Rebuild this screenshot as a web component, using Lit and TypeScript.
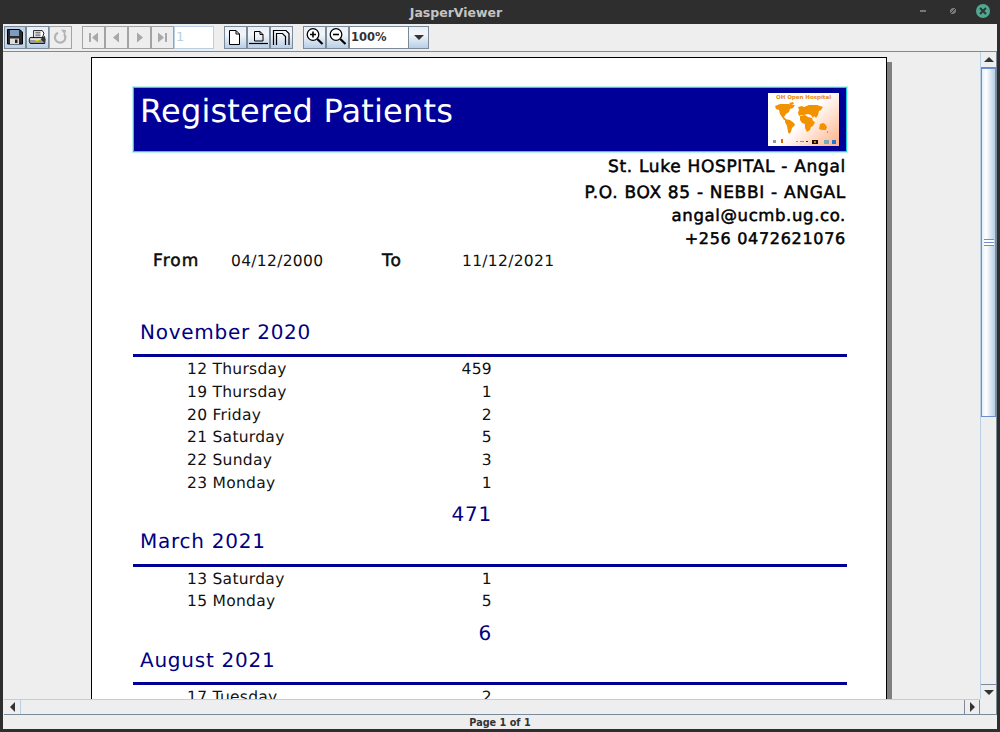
import { LitElement, html, css, svg } from "lit";
import { customElement } from "lit/decorators.js";

const I = {
  save: svg`<path d="M3.5 3.5h12l3 2.5v12h-15z" fill="#2b2b2b" stroke="#000"/><rect x="6" y="4" width="9" height="6" fill="#7d9cc0"/><rect x="6" y="12.5" width="9" height="5.5" fill="#ddd"/><rect x="11" y="13.5" width="2.5" height="3.5" fill="#222"/>`,
  print: svg`<g transform="translate(1.6 2) scale(.86)"><path d="M7 3h10l2 3-2 6H7z" fill="#fff" stroke="#000"/><path d="M9 5h6M9 7h6M9 9h6" stroke="#444"/><path d="M3 11h16l1 2v5H3l-1-2v-3z" fill="#9a9a9a" stroke="#000"/><rect x="3" y="12" width="16" height="2" fill="#e4e4e4"/><rect x="9" y="14" width="4" height="1.5" fill="#e8d800"/><path d="M15 13l5-4 1 5-2 3z" fill="#333"/></g>`,
  reload: svg`<path d="M15 8a5.2 5.2 0 1 1-6-1.3" fill="none" stroke="#b3b3b3" stroke-width="2.2"/><path d="M12 3.5l5 .5-1 5z" fill="#b3b3b3"/>`,
  first: svg`<rect x="7" y="7" width="2" height="9" fill="#a8a8a8"/><path d="M16 6.5v10L10 11.5z" fill="#a8a8a8"/>`,
  prev: svg`<path d="M14 6.5v10L8 11.5z" fill="#a8a8a8"/>`,
  next: svg`<path d="M9 6.5v10l6-5z" fill="#a8a8a8"/>`,
  last: svg`<rect x="14" y="7" width="2" height="9" fill="#a8a8a8"/><path d="M7 6.5v10l6-5z" fill="#a8a8a8"/>`,
  actual: svg`<path d="M5.5 4.5h6.5l3.5 3.5v10.5h-10z" fill="#fff" stroke="#000"/><path d="M12 4.5V8h3.5" fill="none" stroke="#000"/>`,
  fitw: svg`<path d="M7.5 5.5h5.5l3 3v6.5h-8.5z" fill="none" stroke="#000"/><path d="M13 5.5v3h3" fill="none" stroke="#000"/><path d="M2 17.5h19" stroke="#000" stroke-width="1.2"/>`,
  fitp: svg`<path d="M3.5 19V4.5h12.5l3 3V19" fill="none" stroke="#000" stroke-width="1.2"/><path d="M6.5 19V7.5h6l3 3V19" fill="none" stroke="#000" stroke-width="1.2"/>`,
  zin: svg`<circle cx="10" cy="8.5" r="5.8" fill="#fff" stroke="#000" stroke-width="1.3"/><path d="M7 8.5h6M10 5.5v6" stroke="#000" stroke-width="1.6"/><path d="M14.3 13l5.2 5" stroke="#000" stroke-width="2.2"/>`,
  zout: svg`<circle cx="10" cy="8.5" r="5.8" fill="#fff" stroke="#000" stroke-width="1.3"/><path d="M7 8.5h6" stroke="#000" stroke-width="1.6"/><path d="M14.3 13l5.2 5" stroke="#000" stroke-width="2.2"/>`,
};

const groups = [
  { top: 48, ruleTop: 10, ruleBottom: 1, totalTop: 7, days: [["12 Thursday", "459"], ["19 Thursday", "1"], ["20 Friday", "2"], ["21 Saturday", "5"], ["22 Sunday", "3"], ["23 Monday", "1"]], title: "November 2020", total: "471" },
  { top: 3, ruleTop: 11, ruleBottom: 1, totalTop: 8, days: [["13 Saturday", "1"], ["15 Monday", "5"]], title: "March 2021", total: "6" },
  { top: 3, ruleTop: 10, ruleBottom: 1, totalTop: 0, days: [["17 Tuesday", "2"]], title: "August 2021", total: "" },
];

@customElement("app-root")
export class AppRoot extends LitElement {
  static styles = css`
    :host { display: block; width: 1000px; height: 732px; overflow: hidden; background: #2e2e2e; font-family: "DejaVu Sans", sans-serif; }
    .titlebar { height: 24px; display: flex; align-items: center; position: relative; justify-content: center; padding-right: 88px; box-sizing: border-box; color: #c4c4c4; font-size: 12.5px; font-weight: 700; }
    .wctl { position: absolute; right: 10px; top: 1px; display: flex; align-items: center; height: 20px; }
    .min { width: 6px; height: 2px; background: #777; margin-right: 24px; }
    .max { width: 6px; height: 6px; margin-right: 20px; }
    .close { width: 14px; height: 14px; border-radius: 50%; background: #4fa88f; display: flex; align-items: center; justify-content: center; }
    .win { margin: 0 3px; height: 705px; background: #eee; display: flex; flex-direction: column; }
    .toolbar { box-sizing: border-box; flex: none; display: flex; align-items: flex-start; padding: 2px 0 0 1px; border-bottom: 1px solid #7a8a99; height: 28px; }
    .btn { width: 23px; height: 23px; box-sizing: border-box; border: 1px solid #7a8a99; background: linear-gradient(#e8f0f8, #f3f6fa 35%, #b8cfe5); }
    .btn svg { width: 23px; height: 23px; display: block; margin: -1px; }
    .btn.off { border-color: #a3a3a3; background: #eee; }
    .btn.save { width: 22px; background: linear-gradient(#b8cfe5, #d6e3ef 60%, #b8cfe5); }
    .gap { width: 10px; flex: none; }
    .page-in { width: 40px; height: 23px; box-sizing: border-box; border: 1px solid #b8cfe5; background: #fff; color: #b8cfe5; font-size: 13px; padding: 2px 0 0 1px; }
    .zoom { width: 60px; height: 23px; box-sizing: border-box; border: 1px solid #7a8a99; background: #fff; font-weight: 700; font-size: 11.5px; line-height: 21px; padding-left: 1px; color: #333; }
    .combo { width: 20px; height: 23px; box-sizing: border-box; border: 1px solid #7a8a99; border-left: 0; background: linear-gradient(#e8f0f8, #f3f6fa 35%, #b8cfe5); display: flex; align-items: center; justify-content: center; }
    .tri-d { width: 0; height: 0; border: 5px solid transparent; border-top: 5px solid #333; border-bottom: 0; }
    .tri-u { width: 0; height: 0; border: 5px solid transparent; border-bottom: 5px solid #333; border-top: 0; }
    .tri-l { width: 0; height: 0; border: 5px solid transparent; border-right: 5px solid #333; border-left: 0; }
    .tri-r { width: 0; height: 0; border: 5px solid transparent; border-left: 5px solid #333; border-right: 0; }
    .main { flex: none; height: 647px; display: flex; padding-left: 1px; }
    .view { width: 976px; height: 647px; overflow: hidden; padding: 5px 0 0 87px; box-sizing: border-box; }
    .page { width: 796px; height: 800px; box-sizing: border-box; background: #fff; border: 1px solid #000; box-shadow: 5px 5px 0 #808080; padding: 29px 39px 0 41px; color: #000; text-rendering: geometricPrecision; }
    .banner { height: 65px; box-sizing: border-box; background: #000099; border: 1px solid #22d0d0; box-shadow: 0 0 0 1px rgba(34, 208, 208, .3); color: #fff; display: flex; justify-content: space-between; padding: 5px 7px 0 6px; }
    .banner h1 { margin: 0; font-size: 32px; font-weight: 400; line-height: 36px; letter-spacing: .2px; white-space: nowrap; }
    .logo { width: 71px; height: 53px; background: linear-gradient(135deg, #fff 50%, #ffb890 95%); position: relative; overflow: hidden; }
    .logo span { position: absolute; left: 0; right: 0; top: 2px; text-align: center; font-size: 5.5px; font-weight: 700; color: #e8890c; line-height: 7px; white-space: nowrap; }
    .logo svg { position: absolute; inset: 0; width: 71px; height: 53px; }
    .hosp { text-align: right; padding-right: 1px; font-size: 17px; -webkit-text-stroke: .5px #000; }
    .hosp div { white-space: nowrap; letter-spacing: .68px; }
    .h1 { height: 27px; line-height: 31px; }
    .h2 { height: 25px; line-height: 28px; }
    .hosp .h3 { height: 23px; line-height: 23px; font-size: 16.5px; letter-spacing: .62px; }
    .hosp .h4 { height: 23px; line-height: 23px; font-size: 16px; letter-spacing: .7px; }
    .range { display: flex; height: 23px; align-items: center; font-size: 15.5px; margin-top: -1px; white-space: nowrap; color: #111; }
    .range b { font-size: 17px; font-weight: 400; letter-spacing: 1.1px; -webkit-text-stroke: .5px #000; }
    .range span { letter-spacing: .3px; }
    .c1 { width: 78px; padding-left: 20px; }
    .c2 { width: 151px; }
    .c3 { width: 80px; }
    .group { width: 714px; }
    .mtitle { height: 24px; line-height: 24px; padding-left: 7px; font-size: 20px; color: #000080; letter-spacing: .75px; white-space: nowrap; }
    .rule { height: 3px; background: #000099; }
    .row { height: 22.75px; line-height: 22.75px; display: flex; font-size: 15.5px; color: #111; white-space: nowrap; }
    .row .d { width: 54px; }
    .row .n { width: 245px; letter-spacing: .28px; }
    .row .v { width: 60px; text-align: right; letter-spacing: .3px; }
    .total { height: 24px; line-height: 24px; width: 359px; text-align: right; font-size: 20px; color: #000080; letter-spacing: .75px; }
    .vs { width: 17px; height: 647px; box-sizing: border-box; display: flex; flex-direction: column; border-left: 1px solid #b8cfe5; border-right: 1px solid #7a8a99; }
    .vs .b { height: 16px; flex: none; display: flex; align-items: center; justify-content: center; border-bottom: 1px solid #7a8a99; box-sizing: border-box; }
    .vthumb { height: 349px; flex: none; box-sizing: border-box; border: 1px solid #6a8fd0; background: linear-gradient(90deg, #e4edf6, #fff 30%, #b8cfe5); display: flex; align-items: center; justify-content: center; }
    .grip { width: 10px; height: 7px; background: repeating-linear-gradient(#6a8fd0 0 1px, #fff 1px 3px); }
    .vtrack { flex: 1; }
    .vs .dn { height: 15px; border-top: 1px solid #7a8a99; border-bottom: 0; }
    .hrow { height: 16px; flex: none; display: flex; padding-left: 1px; }
    .hs { width: 976px; box-sizing: border-box; display: flex; border-top: 1px solid #b8cfe5; border-bottom: 1px solid #7a8a99; }
    .hs .b { width: 16px; flex: none; display: flex; align-items: center; justify-content: center; }
    .hthumb { flex: 1; border-left: 1px solid #b8cfe5; }
    .hs .rb { border-left: 1px solid #7a8a99; border-right: 1px solid #7a8a99; box-sizing: border-box; }
    .corner { flex: 1; border-bottom: 1px solid #7a8a99; border-right: 1px solid #7a8a99; }
    .status { flex: 1; text-align: center; font-size: 9.7px; font-weight: 700; line-height: 14px; padding-top: 1px; color: #333; }
  `;

  private icon(p: unknown, cls = "") {
    return html`<div class="btn ${cls}"><svg viewBox="0 0 23 23">${p}</svg></div>`;
  }

  private head() {
    return html`
      <div class="banner">
        <h1>Registered Patients</h1>
        <div class="logo">
          <span>OH Open Hospital</span>
          <svg viewBox="0 0 71 53">
            <path fill="#f39200" d="M7 13l5-2 8 0 7 1-2 3-3 1-1 3-3 2-2 3 2 2-2 1-2-3-2-3-1-4-3-1zM21 10l4-1 1 2-3 1zM17 26l5 1 4 3 1 2-3 3-1 4-2 2-1-2-1-6-2-4zM30 14l4-1 2 1 5-2 8 0 6 2-2 3-2 1-1 4-2 3-2-2-1 2-2-3-3-1-4 1-3 0-2 1-1-3 1-3zM32 23l5-1 3 2 4 1 1 3 2 1-2 4-2 1-1 3-3 2-2-4 0-4-3-1-2-3zM52 31l3-1 2 1 2 3-1 3-4 0-3-1zM59 38l1 0 0 2-1 0z"/>
            <rect x="5" y="47" width="3" height="3" fill="#999"/>
            <rect x="13" y="46" width="2" height="4" fill="#d60"/>
            <rect x="28" y="48" width="2" height="1" fill="#a8a"/>
            <rect x="32" y="48" width="4" height="1" fill="#98a"/>
            <rect x="38" y="48" width="2" height="1" fill="#333"/>
            <rect x="44" y="47" width="6" height="4" fill="#221100"/>
            <rect x="46" y="48" width="2" height="2" fill="#c80"/>
            <rect x="56" y="47" width="5" height="4" fill="#7ab"/>
            <rect x="64" y="47" width="4" height="4" fill="#27c"/>
          </svg>
        </div>
      </div>
      <div class="hosp">
        <div class="h1">St. Luke HOSPITAL - Angal</div>
        <div class="h2">P.O. BOX 85 - NEBBI - ANGAL</div>
        <div class="h3">angal@ucmb.ug.co.</div>
        <div class="h4">+256 0472621076</div>
      </div>
      <div class="range">
        <b class="c1">From</b><span class="c2">04/12/2000</span><b class="c3">To</b><span>11/12/2021</span>
      </div>`;
  }

  private group(g: typeof groups[number]) {
    return html`<div class="group" style="margin-top:${g.top}px">
      <div class="mtitle">${g.title}</div>
      <div class="rule" style="margin-top:${g.ruleTop}px;margin-bottom:${g.ruleBottom}px"></div>
      ${g.days.map(([n, v]) => html`<div class="row"><span class="d"></span><span class="n">${n}</span><span class="v">${v}</span></div>`)}
      ${g.total ? html`<div class="total" style="margin-top:${g.totalTop}px">${g.total}</div>` : ""}
    </div>`;
  }

  render() {
    return html`
      <div class="titlebar">JasperViewer
        <div class="wctl">
          <div class="min"></div>
          <svg class="max" viewBox="0 0 6 6"><path d="M0 6V2L2 0h4v4L4 6z" fill="#777"/><path d="M0 6L6 0" stroke="#2e2e2e"/></svg>
          <div class="close"><svg width="8" height="8" viewBox="0 0 8 8"><path d="M1 1l6 6M7 1L1 7" stroke="#2a3a36" stroke-width="2"/></svg></div>
        </div>
      </div>
      <div class="win">
        <div class="toolbar">
          ${this.icon(I.save, "save")}${this.icon(I.print)}${this.icon(I.reload, "off")}
          <div class="gap"></div>
          ${this.icon(I.first, "off")}${this.icon(I.prev, "off")}${this.icon(I.next, "off")}${this.icon(I.last, "off")}
          <div class="page-in">1</div>
          <div class="gap"></div>
          ${this.icon(I.actual)}${this.icon(I.fitw)}${this.icon(I.fitp)}
          <div class="gap"></div>
          ${this.icon(I.zin)}${this.icon(I.zout)}
          <div class="zoom">100%</div>
          <div class="combo"><div class="tri-d"></div></div>
        </div>
        <div class="main">
          <div class="view">
            <div class="page">
              ${this.head()}
              ${groups.map((g) => this.group(g))}
            </div>
          </div>
          <div class="vs">
            <div class="b"><div class="tri-u"></div></div>
            <div class="vthumb"><div class="grip"></div></div>
            <div class="vtrack"></div>
            <div class="b dn"><div class="tri-d"></div></div>
          </div>
        </div>
        <div class="hrow">
          <div class="hs">
            <div class="b"><div class="tri-l"></div></div>
            <div class="hthumb"></div>
            <div class="b rb"><div class="tri-r"></div></div>
          </div>
          <div class="corner"></div>
        </div>
        <div class="status">Page 1 of 1</div>
      </div>`;
  }
}
